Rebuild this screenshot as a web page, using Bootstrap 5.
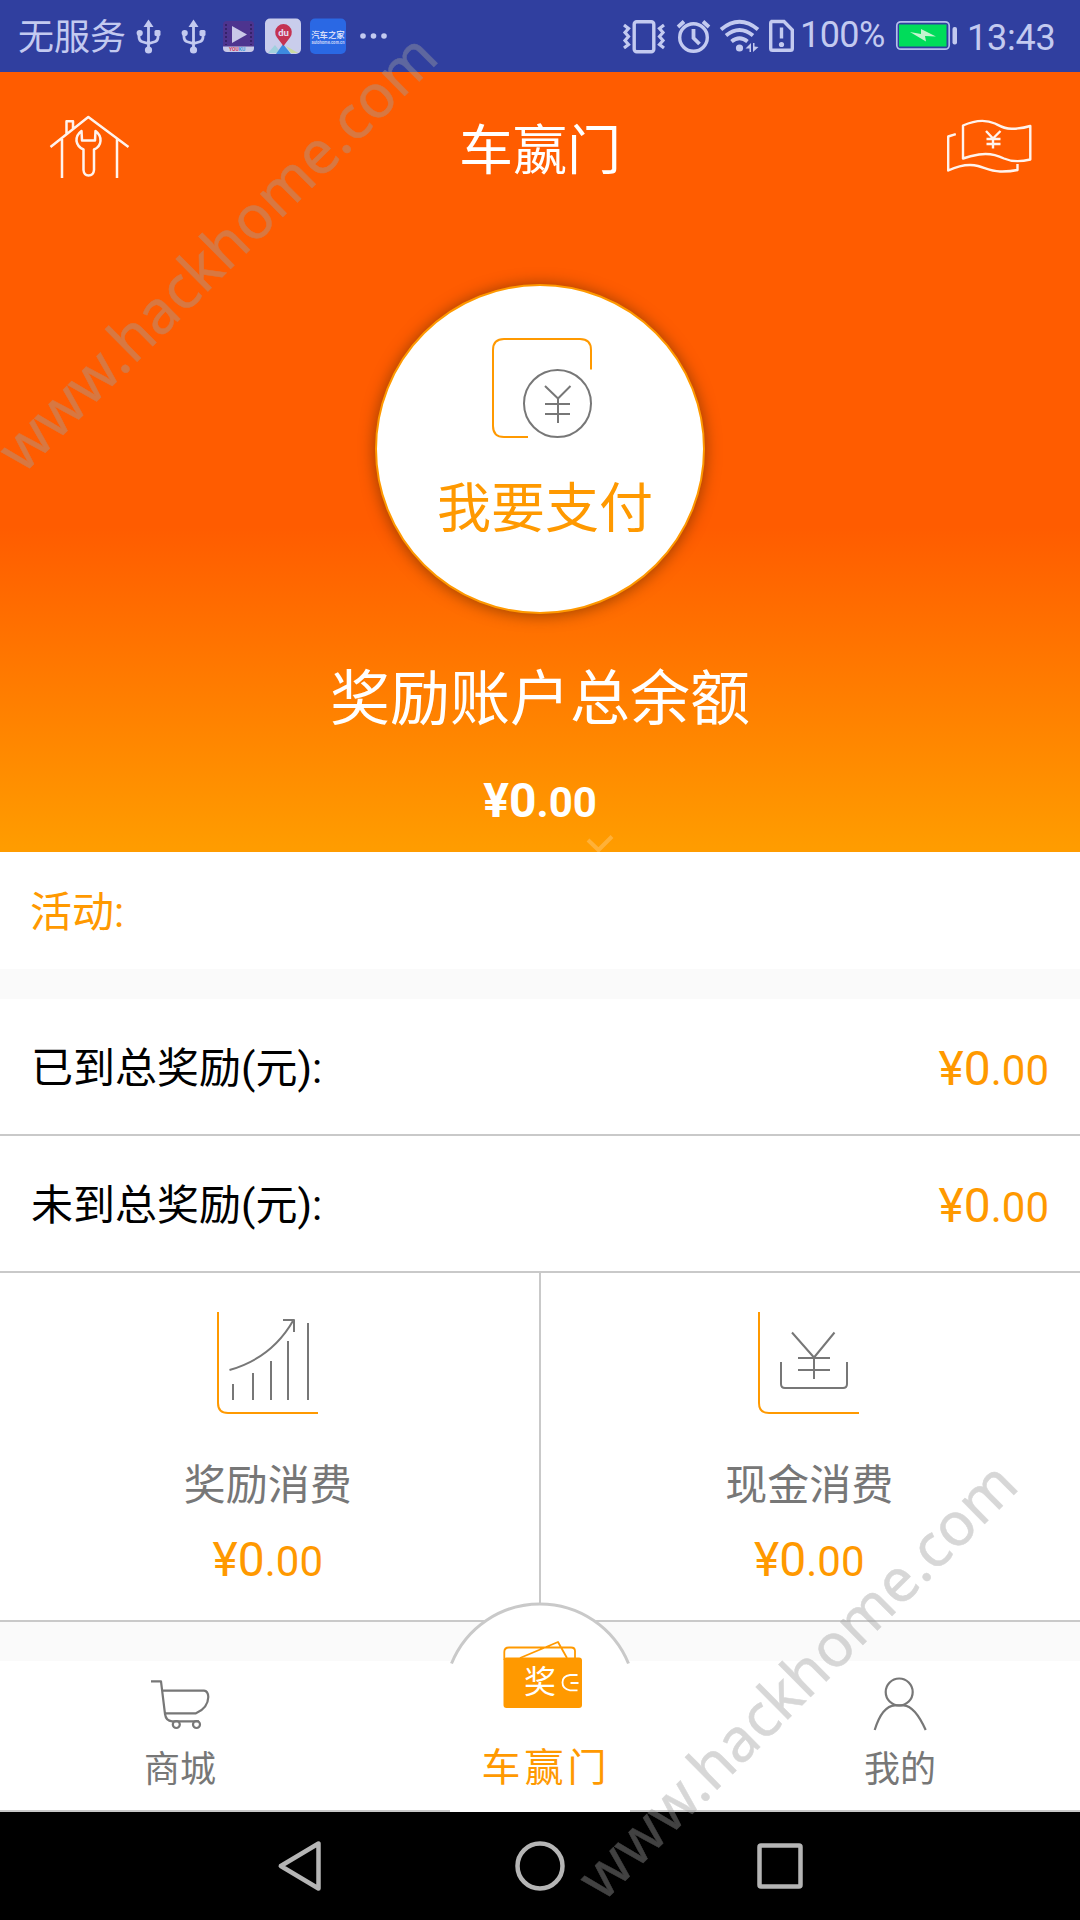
<!DOCTYPE html>
<html lang="zh-CN">
<head>
<meta charset="utf-8">
<meta name="viewport" content="width=device-width, initial-scale=1">
<title>车嬴门</title>
<link href="https://cdn.jsdelivr.net/npm/bootstrap@5.3.0/dist/css/bootstrap.min.css" rel="stylesheet">
<style>
  :root { --amber: #ff9900; --line: #c9c9c9; --ink: #777; --status: #c3caf0; }
  body { width: 1080px; height: 1920px; overflow: hidden; background: #fff; color: #000;
         font-family: Roboto, "Noto Sans CJK SC", sans-serif; font-size: 42px; line-height: 1; }
  svg { display: block; flex: none; }
  .ln { fill: none; stroke-linecap: butt; stroke-linejoin: round; }
  .statusbar { height: 72px; background: #303f9f; color: var(--status); font-size: 36px; }
  .carrier { padding: 4px 0 0 18px; width: 130px; white-space: nowrap; }
  .pct { width: 93px; letter-spacing: -.6px; padding-bottom: 2px; margin-left: -2px; margin-right: 2px; }
  .clock { width: 113px; letter-spacing: -.2px; padding-top: 3px; }
  .hero { height: 780px; background: linear-gradient(#ff5c00 0, #ff5c00 455px, #ff9c00 775px); }
  .hero-top { height: 152px; padding: 0 40px; }
  .hero-title { font-size: 54px; padding-top: 7px; }
  .pay { width: 330px; height: 330px; margin-top: 60px; border: 2px solid var(--amber);
         box-shadow: 0 1px 14px 2px rgba(90,40,0,.5); padding-top: 51px; color: var(--amber); font-size: 54px; }
  .pay-icon { margin-left: 4px; }
  .pay-text { margin: 44px 0 0 10px; }
  .balance-label { font-size: 60px; margin-top: 56px; }
  .amount { font-size: 48px; }
  .amount .cents { font-size: 42px; }
  .balance { margin-top: 47px; }
  .activity { height: 117px; padding: 5px 30px 0; color: var(--amber); }
  .band { background: #fafafa; }
  .band-a { height: 30px; }
  .band-b { height: 39px; }
  .line-row { height: 137px; padding: 5px 31px 0 31px; border-bottom: 2px solid var(--line); }
  .orange { color: var(--amber); }
  .stats { height: 349px; border-bottom: 2px solid var(--line); }
  .stat { width: 540px; padding: 38px 2px 0 0; color: var(--ink); }
  .stat-first { width: 541px; border-right: 2px solid var(--line); padding-right: 3px; }
  .stat-label { margin-top: 50px; }
  .stat .amount { margin-top: 29px; }
  .tabs { height: 151px; font-size: 36px; color: var(--ink); }
  .tab { padding-top: 14px; }
  .tab-label { margin-top: 17px; }
  .tab-side { width: 450px; border-bottom: 2px solid var(--line); }
  .tab-side.start { padding-right: 90px; }
  .tab-side.end { padding-left: 90px; }
  .tab-mid { width: 180px; color: var(--amber); font-size: 39px; letter-spacing: 4px; }
  .tab-mid-label { padding: 88px 0 0 12px; }
  .dome { left: 0; bottom: 0; }
  .sysnav { height: 108px; background: #000; }
  .overlay { inset: 0; pointer-events: none; }
  .wm { font-family: "Noto Sans", "Open Sans", sans-serif; font-size: 60px; fill: rgb(160,160,160);
        stroke: rgb(160,160,160); stroke-width: .5; opacity: .41; }
  .cjk { font-family: "Noto Sans CJK SC", sans-serif; }
</style>
<script src="https://cdn.jsdelivr.net/npm/bootstrap@5.3.0/dist/js/bootstrap.bundle.min.js"></script>
</head>
<body class="position-relative">

<header class="statusbar d-flex align-items-center justify-content-between">
  <div class="d-flex align-items-center">
    <div class="carrier">无服务</div>
    <svg width="270" height="72" viewBox="130 0 270 72">
      <g id="usb" fill="none" stroke="#c3caf0" stroke-width="2.8">
        <path d="M148.5 26V50M139 34V37Q139 41 143 42L148.5 43.500L154 42Q158 41 158 37V34"/>
        <g fill="#c3caf0" stroke="none"><path d="M148.500 19.500L153.500 27H143.500Z"/><circle cx="148.500" cy="50" r="3.600"/><circle cx="139.700" cy="33" r="3.100"/><rect x="154.500" y="30" width="6" height="6" rx="1.500"/></g>
      </g>
      <use href="#usb" x="45"/>
      <rect x="223" y="21" width="31" height="31" rx="4" fill="#4d348f"/>
      <path d="M223 46.500H254V48Q254 52 250 52H227Q223 52 223 48Z" fill="#c7c9e8"/>
      <path d="M226 24V45M251 24V45" stroke="#352169" stroke-width="2" stroke-dasharray="2 2"/>
      <path d="M232 26L247 34.500L232 43Z" fill="#c9c9e8"/>
      <text x="229" y="51.300" font-size="5" font-weight="700" fill="#d03a5c">YOU<tspan fill="#3a9ad8">KU</tspan></text>
      <rect x="265" y="18.500" width="36" height="35.500" rx="5" fill="#c9cdec"/>
      <path d="M268 53L275 45L281 53Z" fill="#9fd0dd"/><path d="M276 54L283 44L291 54Z" fill="#3d8be0"/><path d="M286 46L298 53H291Z" fill="#c9dba0"/>
      <path d="M283.500 46L277 37.500A8.300 8.300 0 1 1 290 37.500Z" fill="#c43352"/>
      <text x="283.500" y="36.300" font-size="9.500" font-weight="700" text-anchor="middle" fill="#e4dcf0">du</text>
      <rect x="310" y="18.500" width="36" height="35.500" rx="5" fill="#2a68e4"/>
      <text class="cjk" x="328" y="37.500" font-size="8.400" font-weight="700" text-anchor="middle" fill="#d5dcf8">汽车之家</text>
      <text x="328" y="43.500" font-size="5" font-weight="700" text-anchor="middle" textLength="33" lengthAdjust="spacingAndGlyphs" fill="#c5d0f8">autohome.com.cn</text>
      <g fill="#c3caf0"><circle cx="363" cy="36" r="2.800"/><circle cx="373.500" cy="36" r="2.800"/><circle cx="384" cy="36" r="2.800"/></g>
    </svg>
  </div>
  <div class="d-flex align-items-center">
    <svg width="182" height="72" viewBox="620 0 182 72">
      <g fill="none" stroke="#c3caf0" stroke-width="3.400">
        <rect x="634.200" y="21.700" width="19.600" height="30" rx="2.500"/>
        <path d="M624 25L628.500 28.500L625 32.500L628.500 36.500L625 40.500L628.500 44.500L624 48M664 25L659.500 28.500L663 32.500L659.500 36.500L663 40.500L659.500 44.500L664 48" stroke-width="3.200"/>
        <circle cx="693.500" cy="37.500" r="13.800"/>
        <path d="M693.500 29V38L699.500 44" stroke-width="3.800"/>
        <path d="M678 27L684 21.500M709 27L703 21.500" stroke-width="3.800"/>
        <path d="M721 29.500Q739.500 14 758 29.500M726 35.500Q739.500 24.500 753 35.500M731.500 41.500Q739.500 35 747.500 41.500" stroke-width="3.900"/>
        <path d="M770.700 21.500H784L792.300 30V48.500Q792.300 50.300 790.500 50.300H772.500Q770.700 50.300 770.700 48.500V23.500Q770.700 21.500 772.500 21.500"/>
        <path d="M781.500 27.500V38.500"/>
      </g>
      <g fill="#c3caf0"><circle cx="739.500" cy="48" r="3.600"/><path d="M751 43V52H749.500V48.500H745.500ZM753 43H754.500V46.500L758.500 47L753 52Z"/><circle cx="781.500" cy="44.500" r="2.600"/></g>
    </svg>
    <div class="pct">100%</div>
    <svg width="72" height="72" viewBox="895 0 72 72">
      <rect x="896.800" y="21.800" width="52.400" height="27.400" rx="4" fill="none" stroke="#b5bdec" stroke-width="1.700"/>
      <rect x="899" y="24.500" width="47.500" height="22" fill="#00dc5a"/>
      <path d="M910 32L921 34V29L936 36.500L925 36L926 41.500Z" fill="#c3f5cf"/>
      <rect x="952.500" y="27" width="4.500" height="17.500" rx="2" fill="#c3caf0"/>
    </svg>
    <div class="clock">13:43</div>
  </div>
</header>

<section class="hero d-flex flex-column align-items-center text-white">
  <div class="hero-top w-100 d-flex align-items-center justify-content-between">
    <svg width="100" height="80" viewBox="40 108 100 80">
      <g class="ln" stroke="#fff" stroke-width="2.500" opacity=".93">
        <path d="M50.500 147L88.300 117L128.500 147M62 139V178M117 139V178M66.500 134V121.300H73V128.500"/>
        <path d="M81.500 131Q76 135 76.500 141Q77.500 147 83.500 149.500V170Q84 175.500 88.500 175.500Q93.500 175.500 94 170V149.500Q100 147 100.500 141Q101 135 95.500 131L95 140.500H82Z"/>
      </g>
    </svg>
    <div class="hero-title">车嬴门</div>
    <svg width="100" height="80" viewBox="941 108 100 80">
      <g class="ln" stroke="#fff" stroke-width="2.400" opacity=".93">
        <path d="M964 125.500C974 121 986 119 996 123.500C1003 127 1006 129 1013 128.800Q1024 128.500 1031.300 126V159.500C1021 162 1013 162 1005 158.500C996 154 989 153 980 154.500Q971 156 964 158.500Z"/>
        <path d="M956.800 134.200L949.200 136.500V170.500C959 166 969 163.500 979 166C986 168 992 171.500 1001 171.500Q1011 171.700 1018.500 170V164"/>
        <path d="M987 131L994 138.500L1001.500 131M994 138V148.500M987.500 139H1001.500M987.500 144H1001.500"/>
      </g>
    </svg>
  </div>
  <div class="pay rounded-circle bg-white d-flex flex-column align-items-center">
    <svg class="pay-icon" width="102" height="102" viewBox="491 337 102 102">
      <path class="ln" d="M591 369.500V350Q591 339 580 339H504Q493 339 493 350V426Q493 437 504 437H528" stroke="#ff9900" stroke-width="2"/>
      <g class="ln" stroke="#777" stroke-width="2"><circle cx="557.500" cy="403.500" r="33.500"/><path d="M545 386L558 398.500L570.500 386M558 398V423M545 404H570M545 414H570"/></g>
    </svg>
    <div class="pay-text">我要支付</div>
  </div>
  <div class="balance-label">奖励账户总余额</div>
  <div class="balance amount fw-bold">¥0<span class="cents">.00</span></div>
</section>

<section class="activity d-flex align-items-center">活动:</section>
<div class="band band-a"></div>

<section>
  <div class="line-row d-flex align-items-center justify-content-between"><span>已到总奖励(元):</span><span class="amount orange">¥0<span class="cents">.00</span></span></div>
  <div class="line-row d-flex align-items-center justify-content-between"><span>未到总奖励(元):</span><span class="amount orange">¥0<span class="cents">.00</span></span></div>
</section>

<section class="stats d-flex">
  <div class="stat stat-first d-flex flex-column align-items-center">
    <svg width="104" height="104" viewBox="217 1311 104 104">
      <path class="ln" d="M219 1312V1403Q219 1413 229 1413H319" stroke="#ff9900" stroke-width="2"/>
      <path class="ln" d="M230.500 1370Q273 1358 294.500 1320M284 1320H295V1332M234 1384V1400M254 1373V1400M272 1361V1400M289 1341V1400M309 1323V1400" stroke="#777" stroke-width="2"/>
    </svg>
    <div class="stat-label">奖励消费</div>
    <div class="amount orange">¥0<span class="cents">.00</span></div>
  </div>
  <div class="stat d-flex flex-column align-items-center">
    <svg width="104" height="104" viewBox="758 1311 104 104">
      <path class="ln" d="M760 1312V1403Q760 1413 770 1413H860" stroke="#ff9900" stroke-width="2"/>
      <path class="ln" d="M782 1362V1384Q782 1388 786 1388H844Q848 1388 848 1384V1362M793 1332.500L815 1357.500L835.500 1332.500M815 1357V1379M799 1358H831M799 1370H831" stroke="#777" stroke-width="2"/>
    </svg>
    <div class="stat-label">现金消费</div>
    <div class="amount orange">¥0<span class="cents">.00</span></div>
  </div>
</section>
<div class="band band-b"></div>

<nav class="tabs d-flex">
  <div class="tab tab-side start d-flex flex-column align-items-center">
    <svg width="64" height="60" viewBox="148 1675 64 60">
      <g class="ln" stroke="#777" stroke-width="2.200"><path d="M151 1681.300H161L165 1714Q166 1721 172 1721.300H199M162.500 1690.700H204Q208 1691 208.300 1697Q208 1708 196 1713.300H165"/><circle cx="176.300" cy="1724.500" r="3.500"/><circle cx="196.500" cy="1724.500" r="3.500"/></g>
    </svg>
    <div class="tab-label">商城</div>
  </div>
  <div class="tab-mid position-relative text-center">
    <svg class="dome position-absolute" width="180" height="211" viewBox="450 1601 180 211">
      <path d="M451.500 1663A95.500 95.500 0 0 1 628.500 1663L630 1665V1812H450V1665Z" fill="#fff"/>
      <path class="ln" d="M451.500 1663.500A95.500 95.500 0 0 1 628.500 1663.500" stroke="#c9c9c9" stroke-width="3"/>
      <rect x="503.500" y="1657.500" width="78.500" height="50.500" rx="3" fill="#ff9900"/>
      <path class="ln" d="M504.300 1660V1652Q504.300 1647.500 509 1647.500H571Q575 1647.500 575 1651V1658M520 1658L558 1642L567 1658" stroke="#ff9900" stroke-width="1.800"/>
      <text class="cjk" x="540" y="1692.500" font-size="32" letter-spacing="0" text-anchor="middle" fill="#fff">奖</text>
      <path class="ln" d="M577.500 1675H570Q562.500 1676 562.500 1682.500Q562.500 1689 570 1690.300H577.500M570.500 1683H578.500" stroke="#fff" stroke-width="1.800"/>
    </svg>
    <div class="tab-mid-label position-relative">车赢门</div>
  </div>
  <div class="tab tab-side end d-flex flex-column align-items-center">
    <svg width="64" height="60" viewBox="868 1675 64 60">
      <g class="ln" stroke="#777" stroke-width="2.200"><circle cx="899.200" cy="1692" r="13.500"/><path d="M874.700 1730Q882 1706 895 1705.300H903.500Q915 1706 925.700 1730"/></g>
    </svg>
    <div class="tab-label">我的</div>
  </div>
</nav>

<footer class="sysnav d-flex justify-content-center">
  <svg width="560" height="108" viewBox="260 1812 560 108">
    <g fill="none" stroke="#b5b5b5" stroke-width="4.500" stroke-linejoin="round">
      <path d="M318.500 1843.500V1888.500L280.800 1866Z"/>
      <circle cx="540" cy="1866" r="22.500"/>
      <rect x="759.500" y="1845.500" width="41" height="41" rx="1.500"/>
    </g>
  </svg>
</footer>

<svg class="overlay position-absolute" width="1080" height="1920" viewBox="0 0 1080 1920">
  <text class="wm" transform="translate(23 475) rotate(-44.800)" textLength="589" lengthAdjust="spacingAndGlyphs">www.hackhome.com</text>
  <text class="wm" transform="translate(603 1903) rotate(-44.800)" textLength="589" lengthAdjust="spacingAndGlyphs">www.hackhome.com</text>
  <path d="M588 840L600 851.500M612 836.500L597 851.500" stroke="#fff" stroke-opacity=".22" stroke-width="4" fill="none"/>
</svg>
</body>
</html>
